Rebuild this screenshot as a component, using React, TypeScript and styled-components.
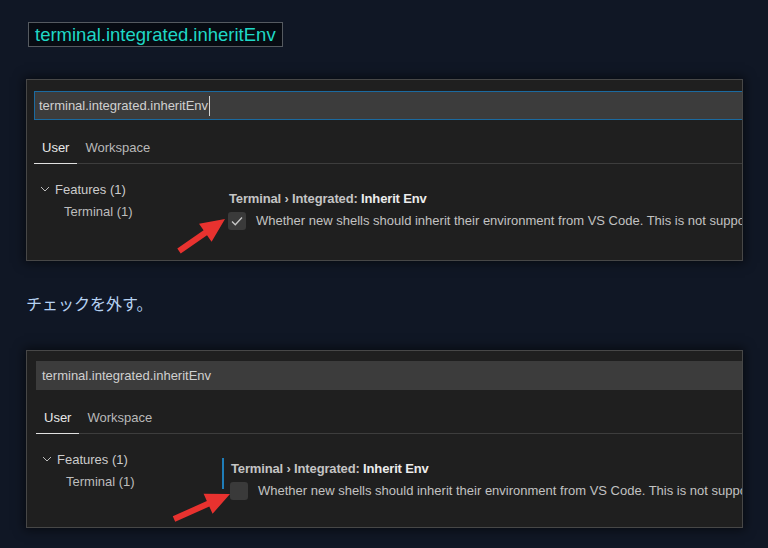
import React from "react";
import styled, { createGlobalStyle } from "styled-components";

const GlobalStyle = createGlobalStyle`
  html, body {
    margin: 0;
    padding: 0;
    background: #101725;
  }
  body {
    font-family: "Liberation Sans", Arial, sans-serif;
    width: 768px;
    height: 548px;
    overflow: hidden;
  }
`;

const Page = styled.div`
  padding: 22px 0 0 26px;
`;

const CodeTag = styled.code`
  display: inline-block;
  margin-left: 2px;
  height: 23px;
  line-height: 23px;
  padding: 0 6px;
  border: 1px solid #555a60;
  background: #070b12;
  color: #1fd8c6;
  font-family: "Liberation Sans", Arial, sans-serif;
  font-size: 18.5px;
`;

const Note = styled.p`
  margin: 30px 0 0 0;
  height: 24px;
  line-height: 24px;
  font-family: "Noto Sans CJK JP", "Liberation Sans", sans-serif;
  font-size: 16px;
  color: #b6d2f2;
`;

const Panel = styled.div<{ $padX: number; $padTop: number; $height: number; $top: number }>`
  position: relative;
  box-sizing: border-box;
  margin-top: ${(p) => p.$top}px;
  width: 717px;
  height: ${(p) => p.$height}px;
  padding: ${(p) => p.$padTop}px 0 0 ${(p) => p.$padX}px;
  background: #1f1f1f;
  border: 1px solid #474747;
  box-shadow: 0 0 10px 2px rgba(0, 0, 0, 0.55);
  overflow: hidden;
`;

const SearchBox = styled.div<{ $focused: boolean }>`
  box-sizing: border-box;
  height: 29px;
  display: flex;
  align-items: center;
  padding-left: ${(p) => (p.$focused ? 4 : 5)}px;
  background: #3c3c3c;
  border: 1px solid ${(p) => (p.$focused ? "#1b6aa0" : "transparent")};
  border-right: none;
  color: #d0d0d0;
  font-size: 13px;
`;

const Caret = styled.span`
  display: inline-block;
  width: 1px;
  height: 20px;
  margin-left: 1px;
  background: #d4d4d4;
`;

const Tabs = styled.div`
  display: flex;
  height: 32px;
  margin-top: 11px;
  border-bottom: 1px solid #3d3d3d;
`;

const Tab = styled.div<{ $active?: boolean }>`
  padding: 1px 8px 0;
  line-height: 32px;
  font-size: 13px;
  color: ${(p) => (p.$active ? "#e8e8e8" : "#b9b9b9")};
  box-shadow: ${(p) => (p.$active ? "inset 0 -1px 0 #e0e0e0" : "none")};
  margin-bottom: -1px;
  height: 33px;
  box-sizing: border-box;
`;

const Body = styled.div`
  display: flex;
`;

const Tree = styled.div`
  flex: none;
  width: 195px;
  padding-top: 14px;
`;

const TreeRow = styled.div<{ $indent: number; $muted?: boolean }>`
  display: flex;
  align-items: center;
  gap: 5px;
  height: 22px;
  padding-left: ${(p) => p.$indent}px;
  font-size: 13px;
  white-space: nowrap;
  color: ${(p) => (p.$muted ? "#bdbdbd" : "#cccccc")};
`;

const Setting = styled.div<{ $selected: boolean }>`
  position: relative;
  flex: 1;
  min-width: 0;
  padding-top: 26px;
  &::before {
    content: "";
    position: absolute;
    left: -9px;
    top: 24px;
    width: 2px;
    height: 31px;
    background: ${(p) => (p.$selected ? "#1f7db8" : "transparent")};
  }
`;

const Title = styled.div`
  height: 18px;
  line-height: 18px;
  font-size: 13px;
  font-weight: bold;
  letter-spacing: -0.15px;
  color: #c4c4c4;
  white-space: nowrap;
  b {
    color: #ececec;
  }
`;

const CheckRow = styled.div`
  display: flex;
  align-items: center;
  gap: 10px;
  margin-top: 4px;
  margin-left: -1px;
  white-space: nowrap;
  font-size: 13px;
  line-height: 16px;
  color: #c2c2c2;
`;

const Box = styled.div`
  flex: none;
  width: 18px;
  height: 18px;
  border-radius: 3px;
  background: #3a3a3a;
  display: flex;
  align-items: center;
  justify-content: center;
`;

const ArrowLayer = styled.svg`
  position: absolute;
  left: 0;
  top: 0;
  width: 100%;
  height: 100%;
  pointer-events: none;
`;

type Pt = [number, number];

const arrowPoints = (tail: Pt, tip: Pt) => {
  const dx = tip[0] - tail[0];
  const dy = tip[1] - tail[1];
  const len = Math.hypot(dx, dy);
  const ux = dx / len;
  const uy = dy / len;
  const nx = -uy;
  const ny = ux;
  const head = 24;
  const hw = 11;
  const sw = 3;
  const bx = tip[0] - ux * head;
  const by = tip[1] - uy * head;
  const pts: Pt[] = [
    [tail[0] + nx * sw, tail[1] + ny * sw],
    [bx + nx * sw, by + ny * sw],
    [bx + nx * hw, by + ny * hw],
    tip,
    [bx - nx * hw, by - ny * hw],
    [bx - nx * sw, by - ny * sw],
    [tail[0] - nx * sw, tail[1] - ny * sw],
  ];
  return pts.map((p) => p.join(",")).join(" ");
};

const Chevron = () => (
  <svg width="10" height="10" viewBox="0 0 10 10">
    <path d="M1 3 L5 7 L9 3" fill="none" stroke="#bbbbbb" strokeWidth="1" />
  </svg>
);

type ShotProps = {
  top: number;
  padX: number;
  padTop: number;
  height: number;
  checked: boolean;
  tail: Pt;
  tip: Pt;
};

const SettingsShot = ({ top, padX, padTop, height, checked, tail, tip }: ShotProps) => (
  <Panel $top={top} $padX={padX} $padTop={padTop} $height={height}>
    <SearchBox $focused={checked}>
      terminal.integrated.inheritEnv
      {checked && <Caret />}
    </SearchBox>
    <Tabs>
      <Tab $active>User</Tab>
      <Tab>Workspace</Tab>
    </Tabs>
    <Body>
      <Tree>
        <TreeRow $indent={6}>
          <Chevron />
          Features (1)
        </TreeRow>
        <TreeRow $indent={30} $muted>
          Terminal (1)
        </TreeRow>
      </Tree>
      <Setting $selected={!checked}>
        <Title>
          Terminal › Integrated: <b>Inherit Env</b>
        </Title>
        <CheckRow>
          <Box>
            {checked && (
              <svg width="14" height="14" viewBox="0 0 14 14">
                <path d="M2 7.5 L5.3 10.8 L12 3.5" fill="none" stroke="#c8c8c8" strokeWidth="1.3" />
              </svg>
            )}
          </Box>
          Whether new shells should inherit their environment from VS Code. This is not supported on Windows.
        </CheckRow>
      </Setting>
    </Body>
    <ArrowLayer>
      <polygon points={arrowPoints(tail, tip)} fill="#e8322f" />
    </ArrowLayer>
  </Panel>
);

export default function App() {
  return (
    <Page>
      <GlobalStyle />
      <CodeTag>terminal.integrated.inheritEnv</CodeTag>
      <SettingsShot
        top={32}
        padX={7}
        padTop={11}
        height={182}
        checked
        tail={[152, 171]}
        tip={[198, 139]}
      />
      <Note>チェックを外す。</Note>
      <SettingsShot
        top={35}
        padX={9}
        padTop={10}
        height={178}
        checked={false}
        tail={[147, 168]}
        tip={[203, 143]}
      />
    </Page>
  );
}
